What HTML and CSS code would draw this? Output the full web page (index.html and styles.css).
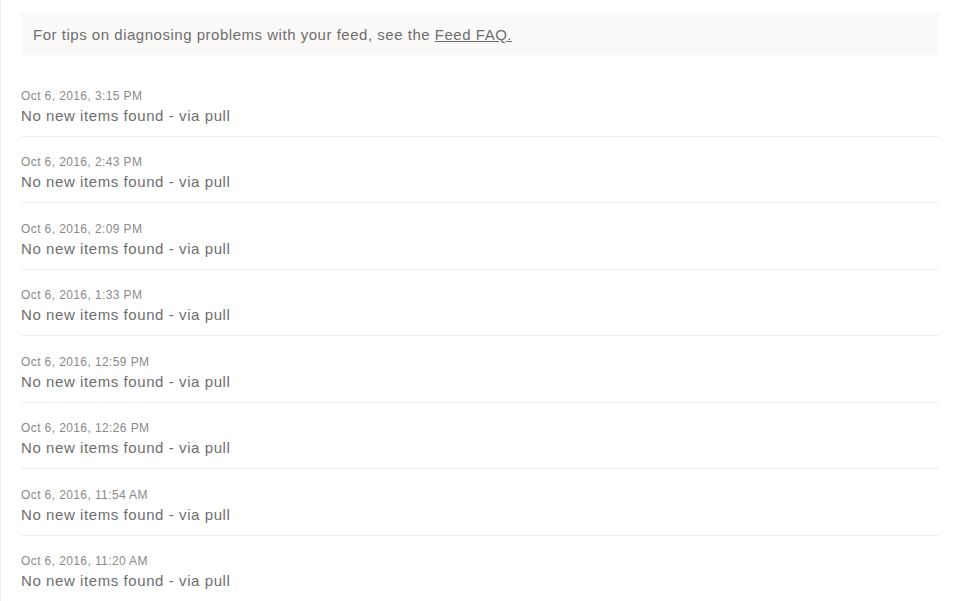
FILE: index.html
```html
<!DOCTYPE html>
<html>
<head>
<meta charset="utf-8">
<link rel="stylesheet" href="styles.css">
</head>
<body>
<div class="page">
  <div class="tip">For tips on diagnosing problems with your feed, see the <a href="#" class="tip-link">Feed FAQ.</a></div>
  <ul class="log">
    <li class="entry"><div class="entry-date">Oct 6, 2016, 3:15 PM</div><div class="entry-msg">No new items found - via pull</div></li>
    <li class="entry"><div class="entry-date">Oct 6, 2016, 2:43 PM</div><div class="entry-msg">No new items found - via pull</div></li>
    <li class="entry"><div class="entry-date">Oct 6, 2016, 2:09 PM</div><div class="entry-msg">No new items found - via pull</div></li>
    <li class="entry"><div class="entry-date">Oct 6, 2016, 1:33 PM</div><div class="entry-msg">No new items found - via pull</div></li>
    <li class="entry"><div class="entry-date">Oct 6, 2016, 12:59 PM</div><div class="entry-msg">No new items found - via pull</div></li>
    <li class="entry"><div class="entry-date">Oct 6, 2016, 12:26 PM</div><div class="entry-msg">No new items found - via pull</div></li>
    <li class="entry"><div class="entry-date">Oct 6, 2016, 11:54 AM</div><div class="entry-msg">No new items found - via pull</div></li>
    <li class="entry"><div class="entry-date">Oct 6, 2016, 11:20 AM</div><div class="entry-msg">No new items found - via pull</div></li>
  </ul>
</div>
</body>
</html>
```
FILE: styles.css
```css
html, body {
  margin: 0;
  padding: 0;
  background: #ffffff;
  height: 100%;
  overflow: hidden;
}
body {
  font-family: "Liberation Sans", Arial, sans-serif;
  color: #6e6e6e;
}
.page {
  border-left: 1px solid #f4ebe9;
  padding: 13px 14px 0 20px;
  min-height: 100%;
  box-sizing: border-box;
}
.tip {
  background: #faf9f8;
  padding: 11px 12px 9px 12px;
  font-size: 15px;
  line-height: 22px;
  letter-spacing: 0.52px;
  color: #6e6e6e;
}
.tip-link {
  color: #6e6e6e;
  text-decoration: underline;
}
.log {
  list-style: none;
  margin: 15px 0 0 0;
  padding: 0;
}
.entry {
  padding: 16.5px 0 9px 0;
  border-bottom: 1px solid #f2eded;
}
.entry-date {
  font-size: 12px;
  line-height: 18px;
  letter-spacing: 0.4px;
  color: #8a8a8a;
}
.entry-msg {
  font-size: 15px;
  line-height: 22px;
  letter-spacing: 0.58px;
  color: #6e6e6e;
}
```
